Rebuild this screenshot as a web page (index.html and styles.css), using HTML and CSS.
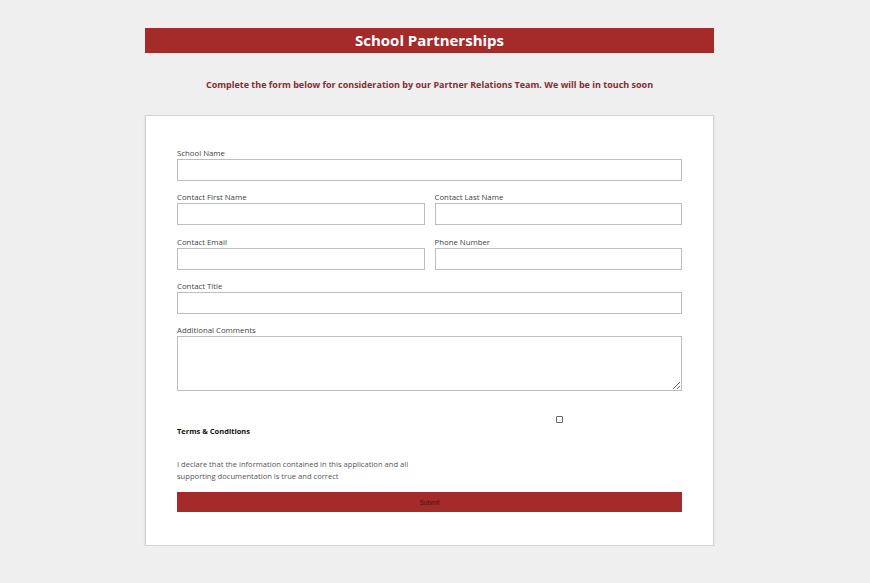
FILE: index.html
```html
<!DOCTYPE html>
<html>
<head>
<meta charset="utf-8">
<link rel="stylesheet" href="styles.css">
</head>
<body>
<div class="page">
  <h1 class="title">School Partnerships</h1>
  <p class="intro">Complete the form below for consideration by our Partner Relations Team. We will be in touch soon</p>
  <form class="card">
    <div class="field full">
      <label>School Name</label>
      <input type="text">
    </div>
    <div class="row">
      <div class="field"><label>Contact First Name</label><input type="text"></div>
      <div class="field"><label>Contact Last Name</label><input type="text"></div>
    </div>
    <div class="row">
      <div class="field"><label>Contact Email</label><input type="text"></div>
      <div class="field"><label>Phone Number</label><input type="text"></div>
    </div>
    <div class="field full">
      <label>Contact Title</label>
      <input type="text">
    </div>
    <div class="field full">
      <label>Additional Comments</label>
      <textarea></textarea>
    </div>
    <div class="terms">
      <div class="terms-left">
        <div class="terms-title">Terms &amp; Conditions</div>
        <p class="declare">I declare that the information contained in this application and all supporting documentation is true and correct</p>
      </div>
      <div class="terms-right"><span class="check"></span></div>
    </div>
    <button type="button" class="submit">Submit</button>
  </form>
</div>
</body>
</html>
```
FILE: styles.css
```css
html, body {
  margin: 0;
  padding: 0;
  background: #efefef;
}
body {
  font-family: "Open Sans", "Noto Sans", sans-serif;
  padding-right: 11px;
}
.page {
  width: 569px;
  margin: 0 auto;
  padding-top: 28px;
}
.title {
  margin: 0;
  height: 25px;
  line-height: 25px;
  background: #a52a2a;
  color: #fff;
  font-size: 15px;
  font-weight: 700;
  text-align: center;
}
.intro {
  margin: 22px 0 0;
  height: 20px;
  line-height: 20px;
  text-align: center;
  color: #8a2a35;
  font-size: 9px;
  font-weight: 700;
}
.card {
  margin-top: 20px;
  background: #fff;
  border: 1px solid #d0d3d8;
  box-shadow: 0 1px 2px rgba(0,0,0,0.12);
  padding: 32px 31px 32px 31px;
  box-sizing: border-box;
  height: 431px;
}
.row {
  display: grid;
  grid-template-columns: 1fr 1fr;
  gap: 10px;
}
.field {
  display: flex;
  flex-direction: column;
  margin-bottom: 11.25px;
}
.field label {
  font-size: 7.8px;
  color: #444;
  line-height: 11px;
  height: 11px;
}
.field input {
  box-sizing: border-box;
  height: 22px;
  border: 1px solid #bdbdbd;
  margin: 0;
  padding: 0 4px;
  background: #fff;
}
.field textarea {
  box-sizing: border-box;
  height: 55px;
  border: 1px solid #bdbdbd;
  margin: 0;
  padding: 4px;
  resize: vertical;
}
.terms {
  display: grid;
  grid-template-columns: 1fr 1fr;
  gap: 10px;
  margin-top: 11px;
}
.terms-left {
  padding-top: 24px;
}
.terms-title {
  font-size: 7.5px;
  font-weight: 700;
  color: #111;
  line-height: 11px;
}
.declare {
  margin: 21px 0 0;
  font-size: 7.6px;
  line-height: 12px;
  color: #555;
  width: 250px;
}
.terms-right {
  display: flex;
  justify-content: center;
  padding-top: 14px;
}
.check {
  width: 5px;
  height: 5px;
  border: 1px solid #666;
  border-radius: 1px;
}
.submit {
  display: block;
  width: 100%;
  height: 20px;
  margin-top: 10px;
  border: 0;
  background: #a52a2a;
  color: #4a1515;
  font-family: "Liberation Sans", Arial, sans-serif;
  font-size: 6.5px;
  padding: 0;
}
```
